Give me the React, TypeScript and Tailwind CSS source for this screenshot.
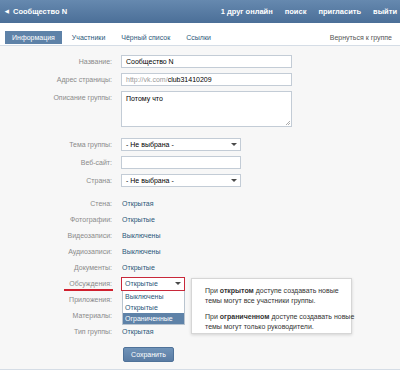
import React from 'react';

const font = "font-['Liberation_Sans',Arial,sans-serif]";

function Label({ children, underline }: { children: React.ReactNode; underline?: boolean }) {
  return (
    <div className="w-[112px] shrink-0 text-right text-[#8a8a8a]">
      <span className="relative">
        {children}
        {underline && <span className="absolute left-[-5px] right-[-1px] bottom-[-4px] h-[1.5px] bg-[#d0202e]" />}
      </span>
    </div>
  );
}

function Arrow() {
  return (
    <span className="ml-auto h-0 w-0 border-l-[3px] border-r-[3px] border-t-[3px] border-l-transparent border-r-transparent border-t-[#4a4a4a]" />
  );
}

const staticRows: { label: string; value: string }[] = [
  { label: 'Стена:', value: 'Открытая' },
  { label: 'Фотографии:', value: 'Открытые' },
  { label: 'Видеозаписи:', value: 'Выключены' },
  { label: 'Аудиозаписи:', value: 'Выключены' },
  { label: 'Документы:', value: 'Открытые' },
];

// values of these two rows are hidden under the open dropdown
const afterRows: { label: string; value?: string }[] = [
  { label: 'Приложения:' },
  { label: 'Материалы:' },
  { label: 'Тип группы:', value: 'Открытая' },
];

export default function App() {
  return (
    <div className={`w-[400px] h-[374px] overflow-hidden bg-white text-[7px] leading-none ${font}`}>
      <header className="h-[23px] bg-gradient-to-b from-[#6689af] to-[#4b6f98] flex items-center pl-[5px] pr-[3px] text-white font-bold text-[7.5px]">
        <span className="text-[5px] mr-[4px]">◀</span>
        <span>Сообщество N</span>
        <nav className="ml-auto flex gap-[12px]">
          <span>1 друг онлайн</span>
          <span>поиск</span>
          <span>пригласить</span>
          <span>выйти</span>
        </nav>
      </header>

      <div className="h-[23px] bg-white border-b border-[#d5dde6] flex items-start pt-[8px] pl-[5px] pr-[8px] text-[#2b587a]">
        <span className="h-[13px] px-[7px] flex items-center bg-[#5e82a8] text-white">Информация</span>
        <span className="h-[13px] ml-[3px] px-[7px] flex items-center">Участники</span>
        <span className="h-[13px] ml-[2px] px-[7px] flex items-center">Чёрный список</span>
        <span className="h-[13px] ml-[2px] px-[7px] flex items-center">Ссылки</span>
        <span className="h-[13px] ml-auto flex items-center text-[#555]">Вернуться к группе</span>
      </div>

      <div className="h-[324px] bg-[#f7f7f7] border-b border-[#d5dde6] pt-[9px] text-[#222]">
        <div className="flex items-center h-[13px]">
          <Label>Название:</Label>
          <div className="ml-[9px] w-[171px] h-[13px] bg-white border border-[#c3ccd6] flex items-center px-[4px] text-black">Сообщество N</div>
        </div>
        <div className="flex items-center h-[13px] mt-[5px]">
          <Label>Адрес страницы:</Label>
          <div className="ml-[9px] w-[171px] h-[13px] bg-white border border-[#c3ccd6] flex items-center px-[4px] text-black">
            <span className="text-[#9a9a9a]">http://vk.com/</span>club31410209
          </div>
        </div>
        <div className="flex items-start h-[36px] mt-[5px]">
          <div className="pt-[3px]"><Label>Описание группы:</Label></div>
          <div className="relative ml-[9px] w-[171px] h-[36px] bg-white border border-[#c3ccd6] px-[4px] pt-[3px] text-black">
            Потому что
            <svg className="absolute right-[1px] bottom-[1px]" width="5" height="5" viewBox="0 0 5 5">
              <path d="M1 5 L5 1 M3 5 L5 3" stroke="#999" strokeWidth="0.8" />
            </svg>
          </div>
        </div>
        <div className="flex items-center h-[13px] mt-[11px]">
          <Label>Тема группы:</Label>
          <div className="ml-[9px] w-[120px] h-[13px] bg-white border border-[#c3ccd6] flex items-center pl-[4px] pr-[3px] text-black">
            - Не выбрана -<Arrow />
          </div>
        </div>
        <div className="flex items-center h-[13px] mt-[5px]">
          <Label>Веб-сайт:</Label>
          <div className="ml-[9px] w-[120px] h-[13px] bg-white border border-[#c3ccd6]" />
        </div>
        <div className="flex items-center h-[13px] mt-[5px]">
          <Label>Страна:</Label>
          <div className="ml-[9px] w-[120px] h-[13px] bg-white border border-[#c3ccd6] flex items-center pl-[4px] pr-[3px] text-black">
            - Не выбрана -<Arrow />
          </div>
        </div>

        <div className="mt-[8px]">
          {staticRows.map((r) => (
            <div key={r.label} className="flex items-center h-[16px]">
              <Label>{r.label}</Label>
              <span className="ml-[10px] text-[#2b587a]">{r.value}</span>
            </div>
          ))}
          <div className="flex items-center h-[16px]">
            <Label underline>Обсуждения:</Label>
            <div className="relative ml-[9px] mt-[1px]">
              <div className="w-[64px] h-[14px] bg-white border border-[#c8283a] flex items-center pl-[3px] pr-[3px] text-[#2b587a]">
                Открытые<Arrow />
              </div>
              <div className="absolute left-[1px] top-full w-[63px] bg-white border border-t-0 border-[#b9c4cf] text-[#2b587a] z-10">
                <div className="h-[11px] flex items-center pl-[2px]">Выключены</div>
                <div className="h-[11px] flex items-center pl-[2px]">Открытые</div>
                <div className="h-[11px] flex items-center pl-[2px] bg-[#5e82a8] text-white">Ограниченные</div>
              </div>
              <div className="absolute left-[70px] top-[1px] w-[161px] h-[56px] bg-white border border-[#d6d6d6] shadow-[0_1px_3px_rgba(0,0,0,0.15)] pl-[13px] pt-[7px] text-[#333] leading-[10px] whitespace-nowrap z-10">
                <p>
                  При <b>открытом</b> доступе создавать новые
                  <br />
                  темы могут все участники группы.
                </p>
                <p className="mt-[6px]">
                  При <b>ограниченном</b> доступе создавать новые
                  <br />
                  темы могут только руководители.
                </p>
              </div>
            </div>
          </div>
          {afterRows.map((r) => (
            <div key={r.label} className="flex items-center h-[16px]">
              <Label>{r.label}</Label>
              {r.value && <span className="ml-[10px] text-[#2b587a]">{r.value}</span>}
            </div>
          ))}
        </div>

        <div className="flex mt-[8px]">
          <div className="w-[123px] shrink-0" />
          <button className="w-[51px] h-[15px] bg-gradient-to-b from-[#7093b8] to-[#5a7ca4] border border-[#4f7299] rounded-[2px] text-white text-[7px] flex items-center justify-center">
            Сохранить
          </button>
        </div>
      </div>
    </div>
  );
}
